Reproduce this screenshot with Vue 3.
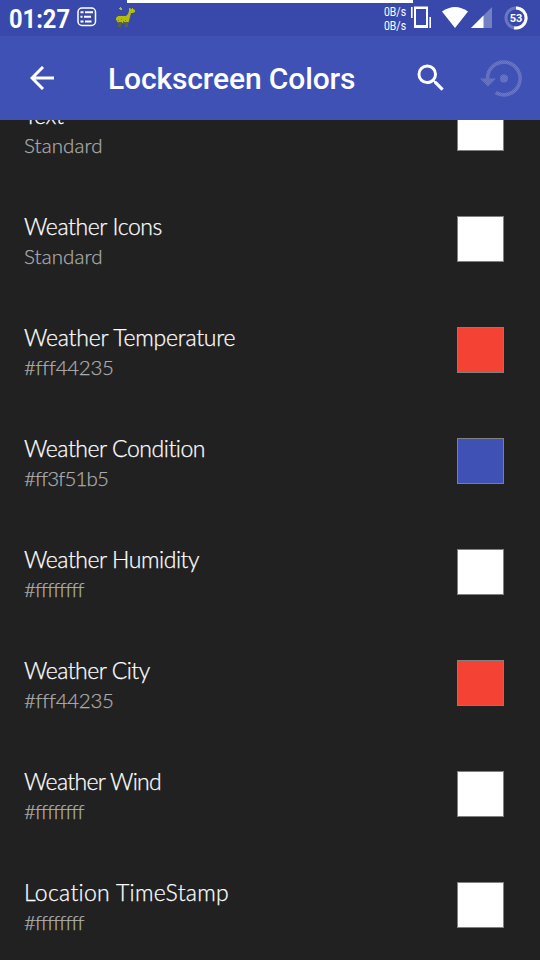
<template>
  <div class="screen">
    <header class="status">
      <div class="progress"></div>
      <span class="clock">01:27</span>
      <svg class="news" width="20" height="20" viewBox="0 0 20 20">
        <rect x="1" y="1" width="17.5" height="17.5" rx="4" fill="none" stroke="#fff" stroke-width="1.5" />
        <path
          d="M3.500 5.200h3M8 5.200H16M3.500 9.800h2M7 9.800H14M3.500 14.500h3M8 14.500H14.500"
          stroke="#fff"
          stroke-width="2"
        />
      </svg>
      <svg class="llama" width="20" height="21" viewBox="0 0 20 21">
        <path
          d="M1 11l2-2h8l2-2 1-3V1h1l1 1h1V1h1v1l2 1v2l-2 1h-2l-1 4-1 4-1 2H3l-1-2-1-1z"
          fill="#b5bd0b"
        />
        <path d="M4 1h1V0h1v1h1v2H5V2H4z" fill="#b5bd0b" />
        <path d="M3 15h4v2l-1 1v2H3v-2l1-1zM8 15h5v5h-3v-3H8z" fill="#5b6146" />
        <path d="M3 13h1v1H3zM6 12h1v1H6zM10 13h1v1h-1zM8 14h1v1H8z" fill="#7b851a" />
      </svg>
      <div class="traffic">
        <span>0B/s</span>
        <span>0B/s</span>
      </div>
      <svg class="vibrate" width="21" height="23" viewBox="0 0 21 23">
        <path
          fill-rule="evenodd"
          d="M4 0.500h14v21.500H4zM6 3v16h10V3z"
          fill="#fff"
        />
        <path d="M1.800 1v11M20.200 11v11" stroke="#fff" stroke-width="1.600" />
      </svg>
      <svg class="wifi" width="26" height="21" viewBox="0 0 26 21">
        <path d="M0 4.500Q13-4.500 26 4.500L13 21z" fill="#fff" />
      </svg>
      <svg class="signal" width="21" height="21" viewBox="0 0 21 21">
        <path d="M0 21L21 0v21z" fill="#fff" fill-opacity=".3" />
        <path d="M0 21L12.500 8.500V21z" fill="#fff" />
      </svg>
      <svg class="battery" width="24" height="24" viewBox="0 0 24 24">
        <circle cx="12" cy="12" r="10" fill="none" stroke="#fff" stroke-opacity=".25" stroke-width="3" />
        <path d="M12 2a10 10 0 1 1-1.900 19.800" fill="none" stroke="#fff" stroke-width="3" />
        <text x="12" y="16" text-anchor="middle">53</text>
      </svg>
    </header>

    <div class="toolbar">
      <svg class="back" width="24" height="24" viewBox="0 0 24 24">
        <path d="M24 12H2M13 1L2 12l11 11" fill="none" stroke="#fff" stroke-width="3" />
      </svg>
      <h1>Lockscreen Colors</h1>
      <svg class="search" width="36" height="36" viewBox="0 0 24 24">
        <path
          d="M15.500 14h-.79l-.28-.27A6.470 6.470 0 0 0 16 9.500 6.500 6.500 0 1 0 9.500 16c1.610 0 3.090-.59 4.230-1.570l.27.28v.79l5 4.990L20.490 19l-4.990-5zm-6 0C7.010 14 5 11.990 5 9.500S7.010 5 9.500 5 14 7.010 14 9.500 11.990 14 9.500 14z"
          fill="#fff"
        />
      </svg>
      <svg class="restore" width="42" height="37" viewBox="0 0 42 37">
        <defs>
          <pattern id="dither" width="2" height="2" patternUnits="userSpaceOnUse">
            <path d="M0 0h2v2H0z" fill="#5a69c0" />
            <path d="M0 0h1v1H0zM1 1h1v1H1z" fill="#7c87cf" fill-opacity=".5" />
          </pattern>
        </defs>
        <path
          d="M7.500 19a16.300 16.300 0 1 1 8.200 13.600"
          fill="none"
          stroke="url(#dither)"
          stroke-width="3.600"
        />
        <path d="M0 18.500h16l-8 8z" fill="url(#dither)" />
        <circle cx="24" cy="18.500" r="4" fill="url(#dither)" />
      </svg>
    </div>

    <main class="list">
      <div v-for="item in items" :key="item.title" class="row">
        <div class="label">
          <div class="title">
            <span :style="{ letterSpacing: item.track + 'px' }">{{ item.title }}</span>
          </div>
          <div class="value">
            <span :style="{ letterSpacing: item.valueTrack + 'px' }">{{ item.value }}</span>
          </div>
        </div>
        <div class="swatch" :style="{ backgroundColor: item.color }"></div>
      </div>
    </main>
  </div>
</template>

<script setup>
const items = [
  { title: "Text", value: "Standard", color: "#ffffff", track: -0.4, valueTrack: 0.1 },
  { title: "Weather Icons", value: "Standard", color: "#ffffff", track: -0.4, valueTrack: 0.1 },
  { title: "Weather Temperature", value: "#fff44235", color: "#f44235", track: -0.22, valueTrack: -0.3 },
  { title: "Weather Condition", value: "#ff3f51b5", color: "#3f51b5", track: -0.45, valueTrack: -0.85 },
  { title: "Weather Humidity", value: "#ffffffff", color: "#ffffff", track: -0.45, valueTrack: -0.9 },
  { title: "Weather City", value: "#fff44235", color: "#f44235", track: -0.5, valueTrack: -0.3 },
  { title: "Weather Wind", value: "#ffffffff", color: "#ffffff", track: -0.65, valueTrack: -0.9 },
  { title: "Location TimeStamp", value: "#ffffffff", color: "#ffffff", track: 0.3, valueTrack: -0.9 },
];
</script>

<style>
body {
  background-color: #212121;
}
</style>

<style scoped>
.screen {
  display: flex;
  flex-direction: column;
  width: 540px;
  height: 960px;
  overflow: hidden;
  background-color: #212121;
  color: #fff;
}

.status {
  position: relative;
  display: flex;
  flex: none;
  align-items: flex-start;
  box-sizing: border-box;
  height: 36px;
  padding-left: 9px;
  background-color: #3949ab;
}
.progress {
  position: absolute;
  top: 0;
  left: 127px;
  width: 286px;
  height: 3px;
  background-color: #fff;
}
.clock {
  width: 68px;
  margin-top: 3px;
  font: 700 26px/32px Roboto, sans-serif;
  transform: scaleX(0.91);
  transform-origin: left;
}
.news {
  margin-top: 7px;
}
.llama {
  margin: 7px 0 0 18px;
}
.traffic {
  display: flex;
  flex-direction: column;
  width: 24px;
  margin: 5px 0 0 249px;
  font: 400 12px/14px Roboto, sans-serif;
  white-space: nowrap;
  transform: scaleX(0.87);
  transform-origin: left;
}
.vibrate {
  margin: 6px 0 0 2px;
}
.wifi {
  margin: 7px 0 0 11px;
}
.signal {
  margin: 7px 0 0 3px;
}
.battery {
  margin: 6px 0 0 12px;
}
.battery text {
  font: 700 11px Roboto, sans-serif;
  fill: #fff;
}

.toolbar {
  z-index: 1;
  display: flex;
  flex: none;
  align-items: center;
  box-sizing: border-box;
  height: 84px;
  padding-left: 30px;
  background-color: #3f51b5;
}
h1 {
  width: 247px;
  margin: 2px 58px 0 54px;
  font: 500 30px/36px Roboto, sans-serif;
  letter-spacing: -0.13px;
  white-space: nowrap;
}
.restore {
  margin-left: 31px;
}

.list {
  flex: 1;
  margin-top: -55px;
}
.row {
  display: flex;
  align-items: center;
  justify-content: space-between;
  box-sizing: border-box;
  height: 111px;
  padding: 14px 36px 0 24px;
}
.label {
  padding-top: 4px;
  font-family: Lato, sans-serif;
  font-weight: 300;
  font-variant-ligatures: none;
  white-space: nowrap;
  -webkit-text-stroke: 0.25px currentColor;
}
.title {
  font-size: 23px;
  line-height: 31px;
}
.value {
  font-size: 20.5px;
  line-height: 29px;
  color: #adadad;
}
.swatch {
  box-sizing: border-box;
  width: 47px;
  height: 46px;
  border: 1px solid #808080;
}
</style>
